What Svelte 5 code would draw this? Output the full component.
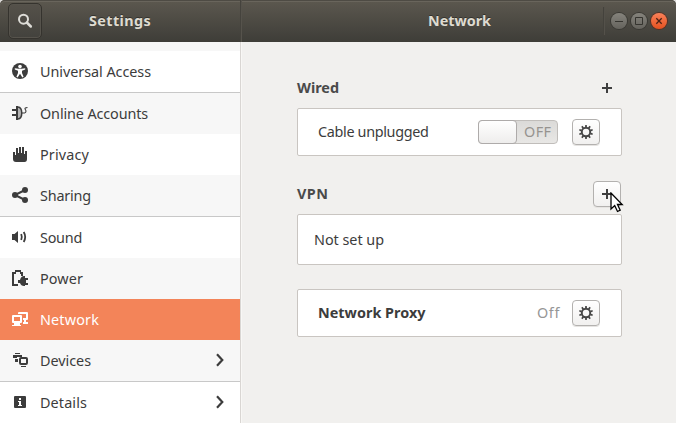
<script>
  const rows = [
    { label: 'Universal Access', icon: 'access', width: 111, line: true },
    { label: 'Online Accounts', icon: 'accounts', width: 108, shade: true },
    { label: 'Privacy', icon: 'privacy', width: 49 },
    { label: 'Sharing', icon: 'sharing', width: 51, shade: true, line: true },
    { label: 'Sound', icon: 'sound', width: 42 },
    { label: 'Power', icon: 'power', width: 43, shade: true },
    { label: 'Network', icon: 'network', width: 59, selected: true },
    { label: 'Devices', icon: 'devices', width: 51, shade: true, line: true, more: true },
    { label: 'Details', icon: 'details', width: 47, more: true }
  ];

  // Spreads the letters of a label so that it fills the given width.
  function fit(node, width) {
    const natural = node.getBoundingClientRect().width;
    node.style.letterSpacing = (width - natural) / node.textContent.length + 'px';
  }
</script>

{#snippet gear()}
  <svg width="14" height="14" viewBox="-7 -7 14 14">
    <circle r="4.2" fill="none" stroke="#464646" stroke-width="1.9" />
    {#each [0, 36, 72, 108, 144, 180, 216, 252, 288, 324] as a}
      <path d="M-1-4.6-.8-7H.8L1-4.6Z" fill="#464646" transform="rotate({a})" />
    {/each}
  </svg>
{/snippet}

{#snippet plus()}
  <svg width="10" height="10" viewBox="0 0 10 10"><path d="M4 0h2v4h4v2H6v4H4V6H0V4h4Z" fill="#3f3f3f" /></svg>
{/snippet}

<div class="window">
  <header>
    <div class="left-head">
      <button class="search" aria-label="Search">
        <svg width="16" height="16" viewBox="0 0 16 16" fill="none" stroke="#deddd8">
          <circle cx="6.5" cy="6.2" r="4.5" stroke-width="2" />
          <path d="M9.800 9.500l4 4" stroke-width="2.500" stroke-linecap="round" />
        </svg>
      </button>
      <span class="title" use:fit={62}>Settings</span>
    </div>
    <div class="right-head">
      <span class="title" use:fit={63}>Network</span>
      <div class="controls">
        <i class="rule"></i>
        <button class="ctl" aria-label="Minimize"><svg width="16" height="16"><path d="M4 8.500h8" stroke="#35342f" /></svg></button>
        <button class="ctl" aria-label="Maximize"><svg width="16" height="16"><path d="M4.500 4.500h7v7h-7z" fill="none" stroke="#35342f" /></svg></button>
        <button class="ctl close" aria-label="Close"><svg width="16" height="16"><path d="M5.300 5.300l5.400 5.400M10.700 5.300l-5.400 5.400" stroke="#4b2114" stroke-width="1.300" /></svg></button>
      </div>
    </div>
  </header>

  <div class="body">
    <nav>
      {#each rows as row}
        <div class="row" class:shade={row.shade} class:line={row.line} class:selected={row.selected}>
          <svg class="icon" width="16" height="16" viewBox="0 0 16 16" fill="currentColor">
            {#if row.icon === 'access'}
              <circle cx="8" cy="8" r="8" />
              <circle cx="8" cy="3.600" r="1.800" fill="#fff" />
              <path d="M2.800 5.200 6.500 5.800h3l3.700-.6v1.400L10 7.700v2.400l1.600 3.600-1.200.7L8 10.800l-2.400 3.600-1.200-.7L6 10.100V7.700L2.800 6.600Z" fill="#fff" />
            {:else if row.icon === 'accounts'}
              <path d="M0 4h4v2H0zM0 9h4v2H0zM4 1h2v14H4z" />
              <path d="M6 2c5 .5 5 11.500 0 12" fill="#b4b4b4" stroke="currentColor" stroke-width="1.500" />
              <path d="M10 8h2.500M15.500 2.500C13 2.500 12.500 3.500 13.300 4.500S14.500 7.500 12.500 8" fill="none" stroke="currentColor" stroke-width="1.100" />
            {:else if row.icon === 'privacy'}
              <path d="M1 6h2v3h1V2h2v5h1V1h2v6h1V1h2v7h1V5h2v8q0 3-2.500 3H4q-3 0-3-3Z" />
            {:else if row.icon === 'sharing'}
              <path d="M13 3 3 8l10 5" fill="none" stroke="currentColor" stroke-width="2" />
              <circle cx="13" cy="3" r="3" /><circle cx="3" cy="8" r="3" /><circle cx="13" cy="13" r="3" />
            {:else if row.icon === 'sound'}
              <path d="M0 5h2.500L6 2v12L2.500 11H0Z" />
              <path d="M9.200 5q1.200 3 0 6M11.700 3q3 5 0 10" fill="none" stroke="currentColor" stroke-width="1.800" />
            {:else if row.icon === 'power'}
              <path d="M3 0h6v2h2v4H9V4H8V2H4v2H2v10h4v2H0V2h3Z" />
              <path d="M8 10q1-4 4-4h1v2h3v2h-2v3h2v2h-3v1h-1q-3 0-4-3H6v-3Z" />
            {:else if row.icon === 'network'}
              <path d="M0 5q0-1 1-1h8q1 0 1 1v6q0 1-1 1H8v2h1v1H0v-1h2v-2H1q-1 0-1-1ZM2 6v4h6V6Z" fill-rule="evenodd" />
              <path d="M6 3V2q0-1 1-1h8q1 0 1 1v6q0 1-1 1h-4V7h3V3ZM12 9h2v2h2v2h-5v-2h1Z" />
            {:else if row.icon === 'devices'}
              <path d="M3 1h5v1H3zM1 3h9v2H5v1H1zM3 7h3v3H3z" />
              <path d="M9 5h5q2 0 2 2v4q0 2-2 2H9q-2 0-2-2V7q0-2 2-2Zm0 2v4h5V7ZM9 14h5v1H9z" fill-rule="evenodd" />
            {:else}
              <path d="M3 2h10q1 0 1 1v10q0 1-1 1H3q-1 0-1-1V3q0-1 1-1Z" />
              <path d="M7 4h2v2H7zM6 7h3v4h1v1H6v-1h1V8H6z" fill="#fff" />
            {/if}
          </svg>
          <span class="label" use:fit={row.width}>{row.label}</span>
          {#if row.more}
            <svg class="chevron" width="8" height="14" viewBox="0 0 8 14"><path d="M1 1.300 6.300 7 1 12.700" fill="none" stroke="#3c3c3c" stroke-width="2.200" /></svg>
          {/if}
        </div>
      {/each}
    </nav>

    <main>
      <div class="heading">
        <b use:fit={42}>Wired</b>
        <button class="flat" aria-label="Add wired">{@render plus()}</button>
      </div>
      <section class="card">
        <span use:fit={110.5}>Cable unplugged</span>
        <div class="switch"><i></i><span use:fit={27.5}>OFF</span></div>
        <button class="btn" aria-label="Wired options">{@render gear()}</button>
      </section>
      <div class="heading vpn">
        <b use:fit={31.5}>VPN</b>
        <button class="btn" aria-label="Add VPN">{@render plus()}
          <svg class="cursor" width="14" height="21" viewBox="0 0 14 21"><path d="M1 1v16l3.700-3.500 2.800 6 2.700-1.300-2.700-5.700h4.700Z" fill="#fff" stroke="#000" stroke-width="1.300" /></svg>
        </button>
      </div>
      <section class="card empty"><span use:fit={70}>Not set up</span></section>
      <section class="card proxy">
        <b use:fit={107.5}>Network Proxy</b>
        <span class="state" use:fit={23}>Off</span>
        <button class="btn" aria-label="Proxy options">{@render gear()}</button>
      </section>
    </main>
  </div>
</div>

<style>
  :global(body) { margin: 0; background: #dcdad8; }
  * { box-sizing: border-box; }
  button { padding: 0; margin: 0; font: inherit; display: flex; align-items: center; justify-content: center; }
  .window { width: 676px; height: 423px; overflow: hidden; display: flex; flex-direction: column; font: 14.4px/20px 'Noto Sans', 'Open Sans', sans-serif; color: #3c3c3c; }
  header { height: 42px; flex: none; display: flex; border-radius: 5px 5px 0 0; background: linear-gradient(#5c584f, #3e3d38); box-shadow: inset 0 1px #4e4b44, inset 0 2px #69655c; }
  .left-head { width: 241px; display: flex; align-items: center; padding-left: 8px; border-right: 1px solid #45433d; }
  .right-head { flex: 1; display: flex; align-items: center; padding-left: 186px; border-left: 1px solid #56534c; }
  .title { font-weight: 700; color: #dedbd1; white-space: nowrap; text-shadow: 0 -1px #33322d; }
  .left-head .title { margin-left: 47px; }
  .search { width: 34px; height: 36px; border: 1px solid #35332e; border-radius: 5px; background: linear-gradient(#55514a, #43423d); box-shadow: inset 0 0 0 1px #56534c; }
  .controls { margin-left: auto; display: flex; align-items: center; gap: 4px; padding-right: 9px; }
  .rule { width: 2px; height: 28px; margin-right: 2px; border-left: 1px solid #44423c; border-right: 1px solid #54514a; }
  .ctl { width: 16px; height: 16px; border: 0; border-radius: 50%; background: linear-gradient(#85837c, #65635d); box-shadow: 0 0 0 1px #3a3934; }
  .close { background: linear-gradient(#fa8159, #e4511f); box-shadow: 0 0 0 1px #5a3023; }
  .body { flex: 1; display: flex; min-height: 0; }
  nav { width: 241px; padding-top: 9px; background: #f7f7f7; border-right: 1px solid #d9d6d3; overflow: hidden; }
  .row { height: 41px; padding: 0 16px 0 12px; display: flex; align-items: flex-start; background: #fff; }
  .row.shade { background: #f7f7f7; }
  .row.line { height: 42px; border-bottom: 1px solid #c8c8c8; }
  .row.selected { background: #f38459; color: #fff; }
  .icon { margin-top: 12px; flex: none; }
  .label { margin: 11px 0 0 12px; white-space: nowrap; }
  .chevron { margin: 13px 0 0 auto; }
  main { flex: 1; padding: 32px 54px 0 56px; background: #f1f0ee; box-shadow: inset 1px 0 #f8f7f5; }
  .heading { height: 34px; display: flex; justify-content: space-between; align-items: flex-start; color: #4a4a4a; }
  .heading b { margin-top: 4px; white-space: nowrap; }
  .flat { width: 30px; height: 28px; border: 0; background: none; }
  .card { height: 48px; display: flex; align-items: center; padding: 0 21px 0 20px; border: 1px solid #c9c5c1; border-radius: 2px; background: #fff; white-space: nowrap; }
  .btn { position: relative; width: 28px; height: 26px; border: 1px solid #b3b1af; border-radius: 4px; background: linear-gradient(#fff, #f1f0ef); box-shadow: 0 1px #e6e4e2; }
  .switch { width: 80px; height: 24px; margin: 0 14px 0 auto; display: flex; border: 1px solid #c0bdba; border-radius: 4px; background: linear-gradient(#dbdad8, #e8e7e5); color: #96938f; }
  .switch i { width: 39px; height: 24px; margin: -1px 7px 0 -1px; border: 1px solid #aeabaa; border-radius: 4px; background: linear-gradient(#fff, #eeedec); }
  .switch span { margin-top: 1px; }
  .vpn { margin-top: 24px; }
  .vpn .btn { margin: 1px 1px 0 0; }
  .cursor { position: absolute; left: 16px; top: 10px; }
  .empty { height: 51px; padding-left: 16px; }
  .proxy { margin-top: 24px; }
  .state { margin: 0 12px 0 auto; color: #969696; }
</style>
